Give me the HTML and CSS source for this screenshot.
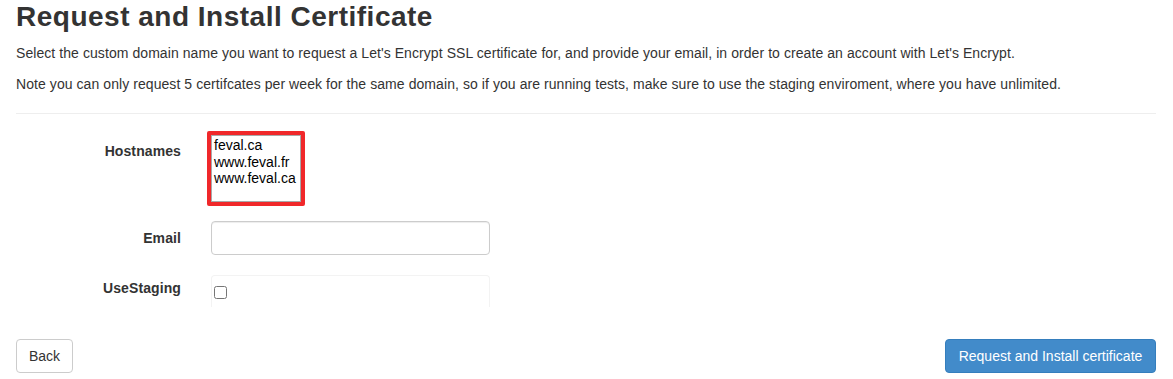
FILE: index.html
```html
<!DOCTYPE html>
<html lang="en">
<head>
<meta charset="UTF-8" />
<title>Request and Install Certificate</title>
<link rel="stylesheet" href="styles.css">
</head>
<body>
<main class="page">
  <h2 class="page__title">Request and Install Certificate</h2>
  <p class="page__text">Select the custom domain name you want to request a Let's Encrypt SSL certificate for, and provide your email, in order to create an account with Let's Encrypt.</p>
  <p class="page__text">Note you can only request 5 certifcates per week for the same domain, so if you are running tests, make sure to use the staging enviroment, where you have unlimited.</p>
  <hr class="divider" />
  <form class="form" id="form">
    <div class="form__row form__row--hosts">
      <label class="form__label" for="hostnames">Hostnames</label>
      <div class="hosts">
        <select class="hosts__list" id="hostnames" multiple>
          <option>feval.ca</option>
          <option>www.feval.fr</option>
          <option>www.feval.ca</option>
        </select>
      </div>
    </div>
    <div class="form__row form__row--email">
      <label class="form__label" for="email">Email</label>
      <input type="email" id="email" class="form__input" />
    </div>
    <div class="form__row form__row--staging">
      <label class="form__label" for="staging">UseStaging</label>
      <div class="form__check">
        <input type="checkbox" id="staging" class="checkbox" />
      </div>
    </div>
  </form>
  <div class="actions">
    <button type="button" class="btn btn--default">Back</button>
    <button type="submit" form="form" class="btn btn--primary">Request and Install certificate</button>
  </div>
</main>
</body>
</html>
```

FILE: styles.css
```css
  /* base, parecido com bootstrap 3 */
  body {
    font-family: 'Liberation Sans', Arial, sans-serif;
    font-size: 14px;
    line-height: 20px;
    color: #333;
    background: #fff;
    margin: 0;
  }
  .page {
    width: 1140px;
    padding: 0 17px 0 16px;
  }
  .page__title {
    font-size: 28px;
    font-weight: 700;
    line-height: 33px;
    margin: 0 0 10px;
    letter-spacing: 0.5px;
  }
  .page__text {
    margin: 0 0 11px;
    letter-spacing: 0.07px;
  }
  .divider {
    border: 0;
    border-top: 1px solid #eee;
    margin: 19px 0 17px;
  }
  .form__row {
    display: grid;
    grid-template-columns: 165px 279px;
    column-gap: 30px;
  }
  .form__label {
    text-align: right;
    font-weight: 700;
    letter-spacing: 0.1px;
  }
  .form__row--hosts {
    margin-bottom: 15px;
  }
  .form__row--hosts .form__label {
    padding-top: 10px;
  }
  .hosts {
    margin-left: -4px;
  }
  .hosts__list {
    display: block;
    width: 98px;
    height: 75px;
    box-sizing: border-box;
    border: 4px solid #f0282a;
    outline: 1px solid #a9a9a9;
    outline-offset: -5px;
    padding: 2px 0 0 3px;
    margin: 0;
    font-family: 'Liberation Sans', Arial, sans-serif;
    font-size: 14px;
    color: #000;
    overflow: hidden;
  }
  .hosts__list option {
    padding: 0;
    min-height: 0;
    height: 16.5px;
    line-height: 16.5px;
  }
  .form__row--email {
    margin-bottom: 20px;
  }
  .form__row--email .form__label {
    padding-top: 7px;
  }
  .form__input {
    display: block;
    box-sizing: border-box;
    width: 279px;
    height: 34px;
    border: 1px solid #ccc;
    border-radius: 4px;
    box-shadow: inset 0 1px 1px rgba(0,0,0,0.075);
    margin: 0;
    font-size: 14px;
  }
  .form__row--staging .form__label {
    padding-top: 3px;
  }
  .form__check {
    height: 32px;
    border: 1px solid #f3f3f3;
    border-bottom: 0;
    border-radius: 4px 4px 0 0;
    box-sizing: border-box;
    padding: 10px 0 0 2px;
  }
  .checkbox {
    display: block;
    width: 13px;
    height: 13px;
    margin: 0;
  }
  .actions {
    display: flex;
    justify-content: space-between;
    margin-top: 32px;
  }
  .btn {
    font-family: 'Liberation Sans', Arial, sans-serif;
    font-size: 14px;
    line-height: 20px;
    padding: 6px 0;
    border-radius: 4px;
    cursor: pointer;
    height: 34px;
    white-space: nowrap;
    text-align: center;
  }
  .btn--default {
    background: #fff;
    color: #333;
    border: 1px solid #ccc;
    width: 57px;
  }
  .btn--primary {
    background: #428bca;
    color: #fff;
    border: 1px solid #357ebd;
    width: 211px;
  }
```
